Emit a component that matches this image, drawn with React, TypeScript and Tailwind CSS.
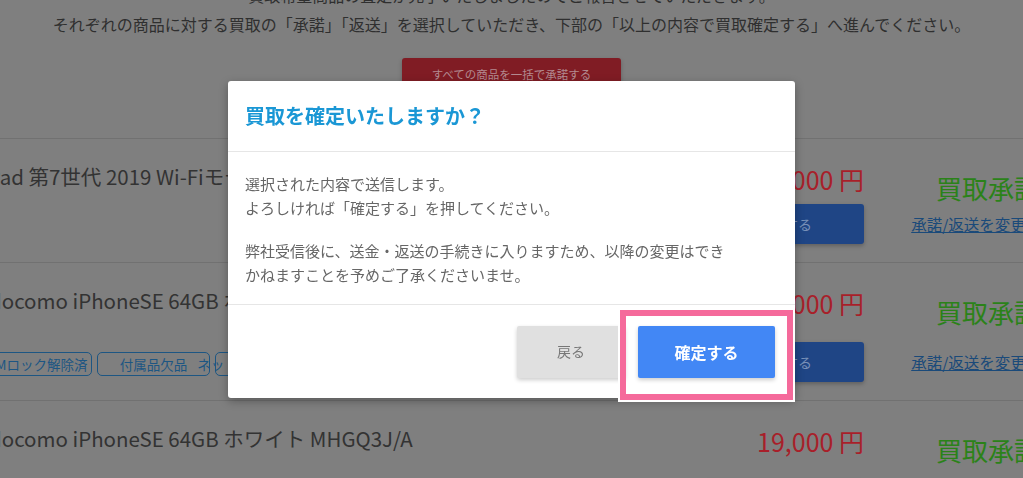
import React from 'react';

interface Row {
  title: string;
  price: string;
  tags?: string[];
  titleShift?: boolean;
}

const rows: Row[] = [
  { title: 'iPad 第7世代 2019 Wi-Fiモデル 32GB スペースグレイ MW742J/A', price: '20,000 円', titleShift: true },
  {
    title: 'docomo iPhoneSE 64GB ホワイト MHGQ3J/A',
    price: '20,000 円',
    tags: ['SIMロック解除済', '付属品欠品', 'ネットワーク利用制限〇'],
  },
  {
    title: 'docomo iPhoneSE 64GB ホワイト MHGQ3J/A',
    price: '19,000 円',
    tags: ['SIMロック解除済', '付属品欠品', 'ネットワーク利用制限〇'],
  },
];

const ItemRow: React.FC<{ row: Row }> = ({ row }) => (
  <div className="flex border-t border-[#717171] pt-[25px] pb-[18px]">
    <div className="flex-1 flex flex-col pb-[6px]">
      <p
        className={`${row.titleShift ? 'ml-[3px]' : 'ml-[10px]'} text-[20.5px] leading-[24px] text-[#333333] whitespace-nowrap`}
      >
        {row.title}
      </p>
      {row.tags && (
        <div className="flex gap-[5px] mt-[40px]">
          {row.tags.map((t) => (
            <span
              key={t}
              className="w-[113px] h-[24px] rounded-[5px] border-[1.5px] border-[#1d5683] text-[13.5px] text-[#1d5683] flex items-center justify-center whitespace-nowrap"
            >
              {t}
            </span>
          ))}
        </div>
      )}
    </div>
    <div className="w-[160px] flex flex-col justify-between items-end gap-[10px]">
      <p className="text-[25px] leading-[30px] text-[#a81f2a] whitespace-nowrap">{row.price}</p>
      <button className="w-[160px] h-[40px] rounded-[3px] bg-[#1f4585] text-[14px] text-[#7890b8] shadow-[0_2px_4px_rgba(0,0,0,0.25)]">
        返送する
      </button>
    </div>
    <div className="w-[168px] ml-[36px] mr-[21px] flex flex-col justify-between items-center pt-[7px] pb-[10px]">
      <p className="ml-[8px] text-[26px] leading-[34px] text-[#2b8219] whitespace-nowrap">買取承諾</p>
      <a className="text-[15.5px] leading-[20px] text-[#1a4a7a] underline whitespace-nowrap">承諾/返送を変更する</a>
    </div>
  </div>
);

export default function App() {
  return (
    <div className="relative h-screen overflow-hidden bg-[#7f7f7f] font-['Noto_Sans_CJK_JP',sans-serif]">
      <div className="mt-[-19px] text-center text-[16px] leading-[29px] text-[#2f2f2f]">
        <p>買取希望商品の査定が完了いたしましたのでご報告させていただきます。</p>
        <p>それぞれの商品に対する買取の「承諾」「返送」を選択していただき、下部の「以上の内容で買取確定する」へ進んでください。</p>
      </div>
      <div className="flex justify-center mt-[19px]">
        <button className="w-[219px] h-[34px] rounded-[3px] bg-[#801c24] text-[11.5px] text-[#b38a90] shadow-[0_2px_4px_rgba(0,0,0,0.25)]">
          すべての商品を一括で承諾する
        </button>
      </div>
      <div className="mt-[46px] ml-[-21px] w-[1110px]">
        {rows.map((r, i) => (
          <ItemRow key={i} row={r} />
        ))}
      </div>

      <div className="fixed inset-0 flex items-center justify-center">
        <div className="relative w-[567px] bg-white rounded-[3px] shadow-[0_3px_10px_rgba(0,0,0,0.3)]">
          <div className="h-[71px] flex items-center px-[17px] border-b border-[#e6e6e6]">
            <h2 className="text-[20px] font-bold text-[#1a97d5]">買取を確定いたしますか？</h2>
          </div>
          <div className="pl-[17px] pr-[60px] pt-[20px] pb-[17px] text-[15px] leading-[24px] text-[#666666]">
            <p>
              選択された内容で送信します。
              <br />
              よろしければ「確定する」を押してください。
            </p>
            <p className="mt-[19px]">
              弊社受信後に、送金・返送の手続きに入りますため、以降の変更はできかねますことを予めご了承くださいませ。
            </p>
          </div>
          <div className="flex justify-end gap-[13px] border-t border-[#e6e6e6] pt-[21px] pb-[20px] pr-[20px]">
            <button className="w-[108px] h-[52px] rounded-[2px] bg-[#e0e0e0] text-[14px] text-[#777777] shadow-[0_2px_4px_rgba(0,0,0,0.2)]">
              戻る
            </button>
            <button className="w-[137px] h-[52px] rounded-[2px] bg-[#4287f5] text-[16px] font-bold text-white shadow-[0_2px_4px_rgba(0,0,0,0.2)]">
              確定する
            </button>
          </div>
          <div className="absolute left-[392px] top-[229px] w-[173px] h-[90px] border-[6px] border-[#f56a9b] outline-2 outline-solid outline-white" />
        </div>
      </div>
    </div>
  );
}
